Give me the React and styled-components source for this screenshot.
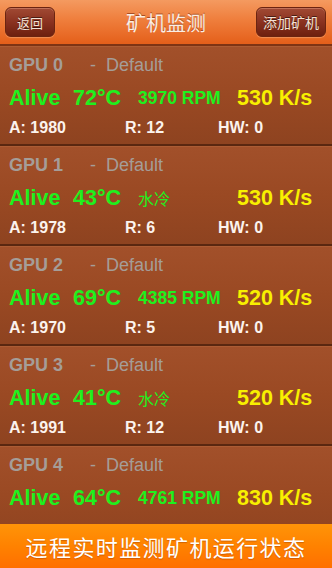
import React from "react";
import styled, { createGlobalStyle } from "styled-components";

const Global = createGlobalStyle`
  html, body { margin: 0; padding: 0; background: #8e4420; }
  body { font-family: "Liberation Sans", Arial, "Noto Sans CJK SC", sans-serif; }
  #root { width: 332px; height: 568px; }
`;

const Screen = styled.div`
  width: 332px;
  height: 568px;
  display: flex;
  flex-direction: column;
  overflow: hidden;
`;

const Header = styled.header`
  height: 44px;
  flex: none;
  display: flex;
  align-items: center;
  justify-content: space-between;
  padding: 0 6px 0 5px;
  background: linear-gradient(#f49a60 0%, #ef7e3c 45%, #e45f1a 100%);
  border-bottom: 2px solid #7e3414;
  position: relative;
`;

const Title = styled.h1`
  position: absolute;
  left: 0;
  right: 0;
  top: 0;
  bottom: 0;
  margin: 0;
  display: flex;
  align-items: center;
  justify-content: center;
  font-family: "Noto Sans CJK SC", sans-serif;
  font-weight: 400;
  font-size: 20px;
  color: #fbeee4;
  text-shadow: 0 -1px 0 rgba(120, 40, 10, 0.6);
  pointer-events: none;
`;

const NavButton = styled.button`
  position: relative;
  z-index: 1;
  height: 30px;
  width: ${(p) => p.$w}px;
  padding: 0;
  border-radius: 6px;
  border: 1px solid #6b2410;
  background: linear-gradient(#a14a34 0%, #8a3220 50%, #6e200f 100%);
  box-shadow: inset 0 1px 0 rgba(255, 190, 160, 0.35), 0 1px 1px rgba(255, 200, 160, 0.4);
  color: #f4e2d6;
  font-family: "Noto Sans CJK SC", sans-serif;
  font-size: ${(p) => p.$fs}px;
  text-shadow: 0 -1px 0 rgba(0, 0, 0, 0.5);
  display: flex;
  align-items: center;
  justify-content: center;
`;

const List = styled.div`
  flex: 1;
  overflow: hidden;
  display: flex;
  flex-direction: column;
`;

const Row = styled.div`
  flex: none;
  display: grid;
  grid-template-rows: 36px 30px 30px;
  padding: 0 0 1px 9px;
  background: linear-gradient(#a2502a 0%, #9a4923 50%, #8e4320 100%);
  border-top: 1px solid #ac5c34;
  border-bottom: 2px solid #5a2710;
`;

const TitleLine = styled.div`
  display: flex;
  align-items: center;
  font-size: 18px;
  color: #a59d98;
`;

const GpuName = styled.span`
  font-weight: 700;
  width: 81px;
`;

const Dash = styled.span`
  width: 16px;
`;

const MainLine = styled.div`
  display: grid;
  grid-template-columns: 64px 65px 99px auto;
  align-items: center;
  font-weight: 700;
`;

const Big = styled.span`
  font-size: 21.5px;
  color: ${(p) => p.$c};
`;

const Rpm = styled.span`
  font-size: 17.5px;
  color: #1ef01e;
`;

const Cool = styled.span`
  font-family: "Noto Sans CJK SC", sans-serif;
  font-weight: 400;
  font-size: 16px;
  color: #1ef01e;
`;

const StatLine = styled.div`
  display: grid;
  grid-template-columns: 116px 93px auto;
  align-items: center;
  font-weight: 700;
  font-size: 16px;
  color: #fbf3ee;
`;

const Banner = styled.footer`
  height: 44px;
  flex: none;
  display: flex;
  align-items: center;
  justify-content: center;
  background: linear-gradient(#ff9408 0%, #ff8200 50%, #ff6f00 100%);
  font-family: "Noto Sans CJK SC", sans-serif;
  font-size: 22px;
  letter-spacing: 1.4px;
  color: #ffffff;
  text-shadow: 0 1px 1px rgba(140, 50, 0, 0.4);
`;

const GREEN = "#1ef01e";
const YELLOW = "#f8f000";

const gpus = [
  { id: 0, temp: "72°C", fan: "3970 RPM", speed: "530 K/s", a: 1980, r: 12, hw: 0 },
  { id: 1, temp: "43°C", cool: "水冷", speed: "530 K/s", a: 1978, r: 6, hw: 0 },
  { id: 2, temp: "69°C", fan: "4385 RPM", speed: "520 K/s", a: 1970, r: 5, hw: 0 },
  { id: 3, temp: "41°C", cool: "水冷", speed: "520 K/s", a: 1991, r: 12, hw: 0 },
  { id: 4, temp: "64°C", fan: "4761 RPM", speed: "830 K/s" },
];

export default function App() {
  return (
    <>
      <Global />
      <Screen>
        <Header>
          <NavButton $w={50} $fs={13}>返回</NavButton>
          <Title>矿机监测</Title>
          <NavButton $w={70} $fs={14}>添加矿机</NavButton>
        </Header>
        <List>
          {gpus.map((g) => (
            <Row key={g.id}>
              <TitleLine>
                <GpuName>GPU {g.id}</GpuName>
                <Dash>-</Dash>
                <span>Default</span>
              </TitleLine>
              <MainLine>
                <Big $c={GREEN}>Alive</Big>
                <Big $c={GREEN}>{g.temp}</Big>
                {g.fan ? <Rpm>{g.fan}</Rpm> : <Cool>{g.cool}</Cool>}
                <Big $c={YELLOW}>{g.speed}</Big>
              </MainLine>
              {g.a !== undefined && (
                <StatLine>
                  <span>A: {g.a}</span>
                  <span>R: {g.r}</span>
                  <span>HW: {g.hw}</span>
                </StatLine>
              )}
            </Row>
          ))}
        </List>
        <Banner>远程实时监测矿机运行状态</Banner>
      </Screen>
    </>
  );
}
